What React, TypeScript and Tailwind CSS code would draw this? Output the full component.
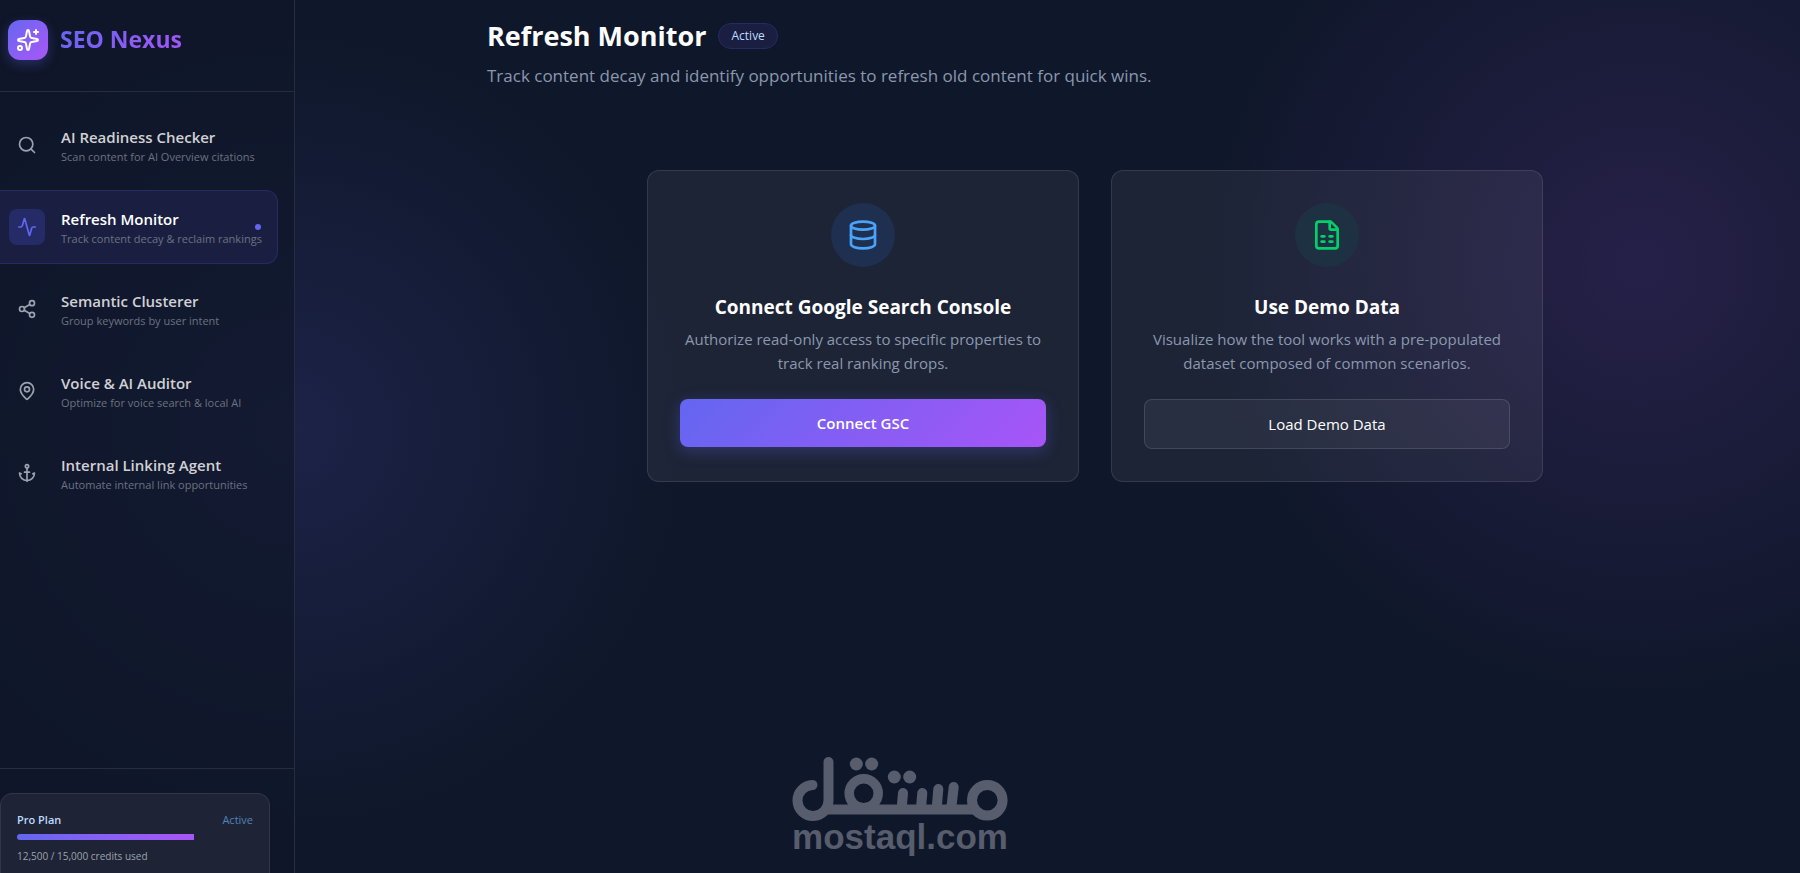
import { Activity, Anchor, Database, FileSpreadsheet, MapPin, Search, Share2, Sparkles } from "lucide-react";
import type { LucideIcon } from "lucide-react";
import { useState } from "react";

type Tool = {
    title: string,
    hint: string,
    icon: LucideIcon
};

const tools: Tool[] = [
    { title: "AI Readiness Checker", hint: "Scan content for AI Overview citations", icon: Search },
    { title: "Refresh Monitor", hint: "Track content decay & reclaim rankings", icon: Activity },
    { title: "Semantic Clusterer", hint: "Group keywords by user intent", icon: Share2 },
    { title: "Voice & AI Auditor", hint: "Optimize for voice search & local AI", icon: MapPin },
    { title: "Internal Linking Agent", hint: "Automate internal link opportunities", icon: Anchor },
];

const Sidebar = () => {
    const [current, setCurrent] = useState("Refresh Monitor");

    return <aside className="flex w-[295px] shrink-0 flex-col border-r border-[#272c3e] bg-[#0f172a]/70">
        <div className="flex h-[92px] items-center gap-3 border-b border-[#272c3e] pb-3 pl-2">
            <div className="flex size-10 items-center justify-center rounded-xl bg-linear-to-br from-[#6366f1] to-[#a855f7] text-white shadow-[0_4px_12px_rgba(99,102,241,0.3)]">
                <Sparkles size={24} />
            </div>
            <span className="bg-linear-[135deg] from-[#6366f1] to-[#a855f7] bg-clip-text text-[23px] font-bold text-transparent">SEO Nexus</span>
        </div>
        <nav className="flex flex-1 flex-col gap-2 pr-4 pt-4">
            {tools.map((tool) => (
                <NavItem key={tool.title} tool={tool} active={tool.title === current} onClick={() => setCurrent(tool.title)} />
            ))}
        </nav>
        <PlanCard />
    </aside>
}

type NavItemProps = {
    tool: Tool,
    active: boolean,
    onClick: () => void
};

const NavItem = ({ tool, active, onClick }: NavItemProps) => {
    const Icon = tool.icon;
    return <button type="button" onClick={onClick} className={`relative flex h-[74px] items-center gap-4 rounded-r-xl border border-l-0 pl-[9px] text-left ${active ? "border-[#272a63] bg-[#1a1f42]" : "border-transparent"}`}>
        <span className={`flex size-9 shrink-0 items-center justify-center rounded-lg ${active ? "bg-[#252b66] text-[#6366f1]" : "text-[#9ca3af]"}`}>
            <Icon size={20} />
        </span>
        <span className="flex flex-col pt-1 whitespace-nowrap">
            <span className={`text-[15px] leading-5 font-semibold ${active ? "text-white" : "text-[#d1d1d4]"}`}>{tool.title}</span>
            <span className="text-[11px] leading-5 text-[#6b7280]">{tool.hint}</span>
        </span>
        {active && <span className="absolute top-1/2 right-4 size-[6px] -translate-y-1/2 rounded-full bg-[#6366f1]" />}
    </button>
}

const PlanCard = () => {
    const used = 75;
    return <div className="h-[105px] border-t border-[#272c3e] pr-6 pt-6">
        <div className="h-24 rounded-xl border border-[#31364a] bg-[#1e2335] px-4 pt-4">
            <div className="flex justify-between text-[11px] leading-5">
                <span className="font-semibold text-[#bfdbfe]">Pro Plan</span>
                <span className="text-[#4f85b8]">Active</span>
            </div>
            <div className="mt-1 h-[6px] overflow-hidden rounded-full">
                <div className="h-full bg-linear-to-r from-[#6366f1] to-[#a855f7]" style={{ width: `${used}%` }} />
            </div>
            <p className="mt-2 text-[10px] leading-4 text-[#9ca3af]">12,500 / 15,000 credits used</p>
        </div>
    </div>
}

type SourceCardProps = {
    title: string,
    text: string,
    icon: LucideIcon,
    iconStyle: string,
    action: string,
    actionStyle: string
};

const SourceCard = ({ title, text, icon: Icon, iconStyle, action, actionStyle }: SourceCardProps) => {
    return <section className="flex flex-col items-center rounded-xl border border-white/10 bg-white/6 p-8 text-center">
        <div className={`flex size-16 items-center justify-center rounded-full ${iconStyle}`}>
            <Icon size={32} />
        </div>
        <h2 className="mt-6 text-[19px] leading-8 font-bold text-white">{title}</h2>
        <p className="mt-1 text-[15px] leading-6 text-[#8b98ae]">{text}</p>
        <button type="button" className={`mt-6 w-full rounded-lg text-[15px] text-white ${actionStyle}`}>{action}</button>
    </section>
}

const MostaqlLogo = () => {
    return <div className="flex flex-col items-center text-[#575d6c]">
        <svg width="216" height="64" viewBox="0 0 216 64" fill="none" stroke="currentColor" strokeWidth="10" strokeLinecap="round">
            <path d="M20.5 28A15.5 15.5 0 1 0 36.5 43V5" />
            <path d="M35 52.5H183" strokeLinecap="butt" />
            <circle cx="71.7" cy="36.3" r="14.5" strokeWidth="9.5" />
            <circle cx="195.3" cy="43.3" r="15.3" />
            <path d="M111 36L109.7 51M130.3 36L129 51M146.3 32L144.7 51M161.7 30L159.3 51" />
            <g fill="currentColor" stroke="none">
                <circle cx="64.3" cy="7" r="6.5" />
                <circle cx="79.7" cy="7" r="6.5" />
                <circle cx="102.3" cy="20" r="6.5" />
                <circle cx="117.7" cy="20" r="6.5" />
            </g>
        </svg>
        <span className="font-['Liberation_Sans',sans-serif] text-[35px] leading-8 font-bold">mostaql.com</span>
    </div>
}

export default function App() {
    return <div className="flex h-screen min-h-fit overflow-hidden bg-[#0f172a] bg-[radial-gradient(circle_at_290px_430px,rgba(99,102,241,0.15),transparent_400px),radial-gradient(circle_at_1640px_265px,rgba(168,85,247,0.15),transparent_440px)] font-['Open_Sans',sans-serif]">
        <Sidebar />
        <main className="flex min-w-0 flex-1 flex-col pt-4 pr-[97px] pl-48">
            <header>
                <div className="flex items-center gap-3">
                    <h1 className="text-[27px] leading-10 font-bold text-white">Refresh Monitor</h1>
                    <span className="rounded-full border border-[#272a63] bg-[#1a1f42] px-3 text-xs leading-6 font-medium text-[#bfdbfe]">Active</span>
                </div>
                <p className="mt-1 text-[17px] leading-8 text-[#8b98ae]">Track content decay and identify opportunities to refresh old content for quick wins.</p>
            </header>
            <div className="mx-auto mt-[78px] grid w-full max-w-4xl grid-cols-2 gap-8">
                <SourceCard
                    title="Connect Google Search Console"
                    text="Authorize read-only access to specific properties to track real ranking drops."
                    icon={Database}
                    iconStyle="bg-[#1e2f50] text-[#4aa3fb]"
                    action="Connect GSC"
                    actionStyle="h-12 bg-linear-[135deg] from-[#6366f1] to-[#a855f7] font-semibold shadow-[0_4px_16px_rgba(99,102,241,0.3)]"
                />
                <SourceCard
                    title="Use Demo Data"
                    text="Visualize how the tool works with a pre-populated dataset composed of common scenarios."
                    icon={FileSpreadsheet}
                    iconStyle="bg-[#1e3143] text-[#05cf6b]"
                    action="Load Demo Data"
                    actionStyle="h-[50px] border border-white/12 bg-white/5"
                />
            </div>
            <footer className="mt-auto mb-5 self-start pl-[305px]">
                <MostaqlLogo />
            </footer>
        </main>
    </div>
}
